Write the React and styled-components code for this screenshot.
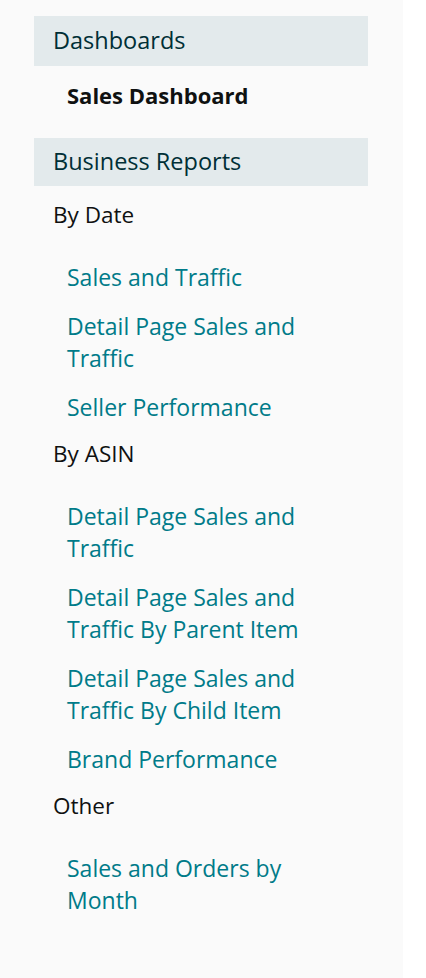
import React from 'react'
import styled, { createGlobalStyle } from 'styled-components'

const GlobalStyle = createGlobalStyle`
    body {
        margin: 0;
        background-color: #ffffff;
        font-family: "Open Sans", "Noto Sans", sans-serif;
    }
`

const Sidebar = styled.nav`
    width: 403px;
    min-height: 978px;
    box-sizing: border-box;
    display: flex;
    flex-direction: column;
    background-color: #fafafa;
    padding: 16px 35px 40px 34px;
`

const SectionHeader = styled.h2`
    margin: ${(p) => (p.$first ? '0' : '27px')} 0 0 0;
    height: ${(p) => (p.$first ? '50px' : '48px')};
    box-sizing: border-box;
    display: flex;
    align-items: center;
    padding: 0 19px 3px 19px;
    background-color: #e3eaec;
    color: #002f36;
    font-size: 23.5px;
    font-weight: 400;
`

const Group = styled.div`
    display: flex;
    flex-direction: column;
`

const GroupLabel = styled.div`
    padding: ${(p) => (p.$first ? '13px' : '15px')} 0 0 19px;
    color: #0f1111;
    font-size: 22.5px;
    line-height: 32px;
`

const LinkList = styled.ul`
    list-style: none;
    margin: 0;
    padding: 0 0 0 33px;
`

const LinkItem = styled.li`
    padding-top: ${(p) => p.$gap}px;
    max-width: 240px;
`

const NavLink = styled.a`
    display: block;
    color: ${(p) => (p.$active ? '#0f1111' : '#007b89')};
    font-weight: ${(p) => (p.$active ? 700 : 500)};
    font-size: ${(p) => (p.$active ? '22px' : '23px')};
    line-height: 32px;
    text-decoration: none;
    cursor: pointer;
`

const groups = [
    {
        label: 'By Date',
        links: ['Sales and Traffic', 'Detail Page Sales and Traffic', 'Seller Performance'],
    },
    {
        label: 'By ASIN',
        links: [
            'Detail Page Sales and Traffic',
            'Detail Page Sales and Traffic By Parent Item',
            'Detail Page Sales and Traffic By Child Item',
            'Brand Performance',
        ],
    },
    {
        label: 'Other',
        links: ['Sales and Orders by Month'],
    },
]

export default function App() {
    return (
        <>
            <GlobalStyle />
            <Sidebar>
                <SectionHeader $first>Dashboards</SectionHeader>
                <LinkList>
                    <LinkItem $gap={13}>
                        <NavLink $active>Sales Dashboard</NavLink>
                    </LinkItem>
                </LinkList>

                <SectionHeader>Business Reports</SectionHeader>
                {groups.map((group, i) => (
                    <Group key={group.label}>
                        <GroupLabel $first={i === 0}>{group.label}</GroupLabel>
                        <LinkList>
                            {group.links.map((name, j) => (
                                <LinkItem key={name + j} $gap={j === 0 ? 30 : 17}>
                                    <NavLink>{name}</NavLink>
                                </LinkItem>
                            ))}
                        </LinkList>
                    </Group>
                ))}
            </Sidebar>
        </>
    )
}
